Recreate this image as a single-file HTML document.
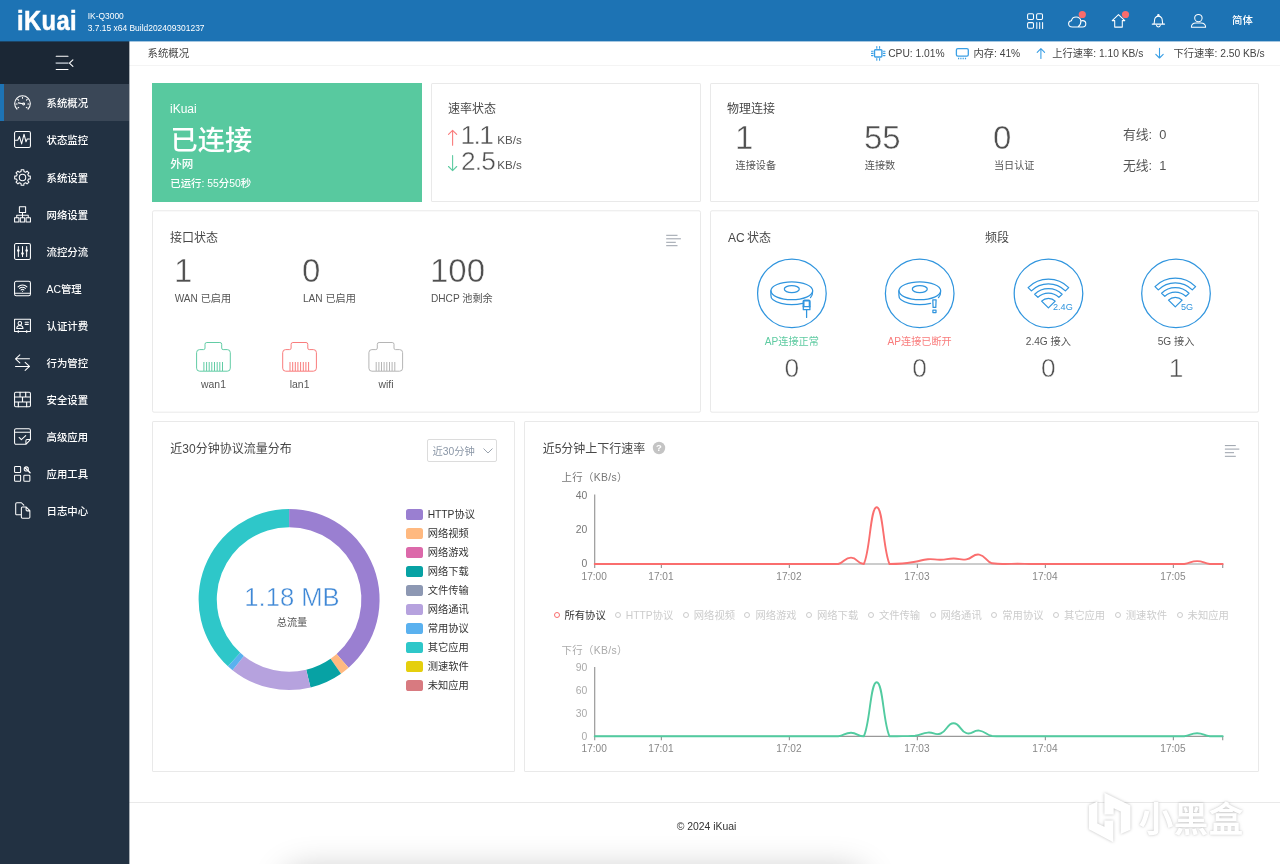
<!DOCTYPE html>
<html lang="zh-CN">
<head>
<meta charset="utf-8">
<title>iKuai - 系统概况</title>
<style>
*{box-sizing:border-box;margin:0;padding:0}
html,body{width:1280px;height:864px;overflow:hidden;background:#fff}
#app{position:absolute;left:0;top:0;width:1280px;height:864px;overflow:hidden;background:#fff;will-change:transform}
body{position:relative;font-family:"Liberation Sans","Noto Sans CJK SC",sans-serif;font-size:10.4px;color:#444;line-height:1}
.a{position:absolute;white-space:nowrap}
svg{position:absolute;overflow:visible}
#hdr{position:absolute;left:0;top:0;width:1280px;height:41px;background:#1d73b4;box-shadow:0 1px 0 rgba(29,115,180,.4);z-index:3}
#logo{position:absolute;left:16.6px;top:4.3px;font-size:27.4px;line-height:33px;font-weight:bold;color:#fff;-webkit-text-stroke:.5px #fff;letter-spacing:.5px;transform-origin:0 50%;transform:scaleX(.865)}
.ver{position:absolute;left:87.7px;color:#fff;font-size:8.45px;line-height:12px;white-space:nowrap}
.hi{fill:none;stroke:#fff;stroke-width:1.05;stroke-linecap:round;stroke-linejoin:round}
#side{position:absolute;left:0;top:41px;width:129px;height:823px;background:#223142;box-shadow:1px 0 0 rgba(34,49,66,.38);z-index:2}
#tog{position:absolute;left:0;top:0;width:129px;height:43.3px;background:#1b2735}
.mi{position:absolute;left:0;width:129px;height:37.1px;color:#fff;font-size:10.4px;line-height:37.1px}
.mi span{position:absolute;left:46.5px;top:1px;font-weight:500}
.mi svg{left:14px;top:10.05px;width:17px;height:17px;fill:none;stroke:#fff;stroke-width:1.1;stroke-linecap:round;stroke-linejoin:round}
.mi.on{background:#3a4757}
.mi.on:before{content:"";position:absolute;left:0;top:0;width:3.6px;height:100%;background:#1d73b4}
#crumb{position:absolute;left:129px;top:41px;width:1151px;height:24.5px;border-bottom:1px solid #f4f4f4;background:#fff}
.st{position:absolute;top:1px;line-height:24px;font-size:10.25px;color:#444;white-space:nowrap}
.card{position:absolute;background:#fff;border-radius:1.5px;box-shadow:inset 0 0 0 1px #e9e9e9}
.tt{position:absolute;margin-top:1px;font-size:12px;line-height:16px;color:#484848;white-space:nowrap}
.big{position:absolute;font-size:33px;line-height:32px;color:#505050;-webkit-text-stroke:.5px #fff;paint-order:fill stroke;white-space:nowrap}
.lb{position:absolute;margin-top:1px;font-size:10.15px;line-height:14px;color:#555;white-space:nowrap}
.c{transform:translateX(-50%)}
.lg{position:absolute;left:254px;width:110px;height:19px}
.lg i{position:absolute;left:.2px;top:4px;width:17.2px;height:10.6px;border-radius:2.6px}
.lg span{position:absolute;left:21.7px;top:0;line-height:19px;font-size:10.25px;color:#333;white-space:nowrap}
.cl{position:absolute;top:187.5px;height:14px;line-height:14px;font-size:10.3px;color:#ccc;white-space:nowrap}
.cl i{position:absolute;left:-11px;top:3.5px;width:6px;height:6px;border:1px solid #ccc;border-radius:50%}
</style>
</head>
<body>
<div id="app">
<div id="hdr">
  <div id="logo">iKuai</div>
  <div class="ver" style="top:10px">IK-Q3000</div>
  <div class="ver" style="top:21.5px">3.7.15 x64 Build202409301237</div>
  <svg class="hi" style="left:1020px;top:0;width:200px;height:41px" viewBox="1020 0 200 41">
    <rect x="1027.6" y="13.7" width="5.9" height="5.7" rx="1.2"/>
    <rect x="1036.6" y="13.7" width="5.9" height="5.7" rx="1.2"/>
    <rect x="1027.6" y="22.6" width="5.9" height="5.7" rx="1.2"/>
    <path d="M1036.8 22.4v6.1M1039.7 22.4v6.1M1042.6 22.4v6.1"/>
    <path d="M1072.3 26.9c-2.3 0-3.7-1.4-3.7-3.1 0-1.6 1.2-2.9 2.8-3 .4-2.3 2.3-3.9 4.7-3.9 2.5 0 4.5 1.8 4.8 4.1M1080.9 21c.5-.3 1.1-.4 1.7-.4 1.8 0 3.2 1.4 3.2 3.1 0 1.8-1.4 3.2-3.2 3.2h-10.3M1080.9 21c.2 2.4-.9 4.4-2.9 5.9"/>
    <path d="M1118.5 14.6l6.3 6h-2.5v6.5h-7.6v-6.5h-2.5z"/>
    <path d="M1152.2 24.1h12.4M1153.9 24.1c.8-2.1.3-4.3 1.2-6 .8-1.4 1.9-2 3.3-2s2.5.6 3.3 2c.9 1.7.4 3.9 1.2 6M1156.5 25.4c.5 2 3.3 2 3.8 0"/>
    <circle cx="1158.4" cy="15.2" r=".7"/>
    <circle cx="1198.4" cy="18.1" r="3.7"/>
    <path d="M1191.4 27.3c0-2.8 2.1-4.3 4.6-4.3h4.8c2.5 0 4.8 1.5 4.8 4.3z"/>
    <circle cx="1082.3" cy="14.5" r="3.6" fill="#f96c6c" stroke="none"/>
    <circle cx="1125.5" cy="14.5" r="3.6" fill="#f96c6c" stroke="none"/>
  </svg>
  <div class="a" style="left:1232px;top:10px;line-height:21px;font-size:10.4px;font-weight:500;color:#fff">简体</div>
</div>
<div id="side">
<div id="tog"><svg style="left:55px;top:10px;width:20px;height:20px" viewBox="55 51 20 20" fill="none" stroke="#fff" stroke-width="1.1" stroke-linecap="round" stroke-linejoin="round"><path d="M56.2 56.3h11.8M56.2 69.5h11.8M72.9 59.8l-3.5 3.3 3.5 3.3"/><path d="M56.2 63.1h11.8" stroke="#9aa3ad" stroke-width="1.6"/></svg></div>
<div class="mi on" style="top:43.3px"><svg viewBox="0 -.4 18 18"><path d="M3.1 15.6A8.3 8.3 0 1 1 14.9 15.6M9 3v1.2M4 5.3l.8.8M14 5.3l-.8.8M2.2 10.2h1.1M15.8 10.2h-1.1M4.2 14.4l.8-.7M13.8 14.4l-.8-.7M4.6 9l4.6 1"/><circle cx="10.2" cy="10.2" r="1"/></svg><span>系统概况</span></div>
<div class="mi" style="top:80.4px"><svg viewBox="0 0 18 18"><rect x=".6" y=".6" width="16.8" height="16.8" rx="1.6"/><path d="M1.6 9.8h2.4l1.8-3.9 2.3 7.8 2.5-10.3 2.1 8 1.3-3h2.4"/></svg><span>状态监控</span></div>
<div class="mi" style="top:117.5px"><svg viewBox="0 0 18 18"><path d="M7.48 2.68 L7.56 0.73 L10.44 0.73 L10.52 2.68 L12.40 3.46 L13.83 2.13 L15.87 4.17 L14.54 5.60 L15.32 7.48 L17.27 7.56 L17.27 10.44 L15.32 10.52 L14.54 12.40 L15.87 13.83 L13.83 15.87 L12.40 14.54 L10.52 15.32 L10.44 17.27 L7.56 17.27 L7.48 15.32 L5.60 14.54 L4.17 15.87 L2.13 13.83 L3.46 12.40 L2.68 10.52 L0.73 10.44 L0.73 7.56 L2.68 7.48 L3.46 5.60 L2.13 4.17 L4.17 2.13 L5.60 3.46Z"/><circle cx="9" cy="9" r="3.4"/></svg><span>系统设置</span></div>
<div class="mi" style="top:154.6px"><svg viewBox="0 0 18 18"><rect x="5.7" y=".7" width="6.6" height="6.2"/><path d="M9 6.9v5.4M2.9 12.3V9.8h12.2v2.5"/><rect x=".6" y="12.4" width="4.6" height="4.6"/><rect x="6.7" y="12.4" width="4.6" height="4.6"/><rect x="12.8" y="12.4" width="4.6" height="4.6"/></svg><span>网络设置</span></div>
<div class="mi" style="top:191.7px"><svg viewBox="0 0 18 18"><rect x=".6" y=".6" width="16.8" height="16.8" rx="1.6"/><path d="M4.6 3.8v10.4M9 3.8v10.4M13.4 3.8v10.4"/><circle cx="4.6" cy="8" r=".8" fill="#fff"/><circle cx="9" cy="11.2" r=".8" fill="#fff"/><circle cx="13.4" cy="8" r=".8" fill="#fff"/></svg><span>流控分流</span></div>
<div class="mi" style="top:228.8px"><svg viewBox="0 0 18 18"><rect x=".6" y="1.4" width="16.8" height="15.2" rx="1.8"/><path d="M.8 14h16.4M4.3 7.3a6.6 6.6 0 0 1 9.4 0M5.8 9a4.5 4.5 0 0 1 6.4 0M7.4 10.6a2.3 2.3 0 0 1 3.2 0"/><circle cx="9" cy="11.9" r=".6" fill="#fff" stroke="none"/></svg><span>AC管理</span></div>
<div class="mi" style="top:265.9px"><svg viewBox="0 0 18 18"><path d="M3.6 15.4H.6V2.4h16.8v13h-3M5.4 15.4h7.2M4.5 14.3v2.2M13.5 14.3v2.2"/><circle cx="6.2" cy="6.6" r="1.9"/><path d="M2.9 12.2c0-2.2 1.4-3.3 3.3-3.3s3.3 1.1 3.3 3.3z"/><path d="M11.8 5.6h3.4M11.8 7.8h3.4"/></svg><span>认证计费</span></div>
<div class="mi" style="top:303px"><svg viewBox="0 0 18 18"><path d="M16.4 5.1H1.6M6.2.9L1.6 5.1l4.6 4.3M1.6 13.2h14.8M11.8 8.9l4.6 4.3-4.6 4.2"/></svg><span>行为管控</span></div>
<div class="mi" style="top:340.1px"><svg viewBox="0 0 18 18"><rect x=".6" y="1.4" width="16.8" height="15.2" rx="1.2"/><path d="M.6 6.4h16.8M.6 11.6h16.8M6.4 1.4v5M12.4 1.4v5M9 6.4v5.2M4.6 11.6v5M13.4 11.6v5" stroke-width="1.2"/></svg><span>安全设置</span></div>
<div class="mi" style="top:377.2px"><svg viewBox="0 0 18 18"><path d="M2.2.7h13.6a1.6 1.6 0 0 1 1.6 1.6v9.9l-4.8 5.1H2.2a1.6 1.6 0 0 1-1.6-1.6V2.3A1.6 1.6 0 0 1 2.2.7zM.6 4.4h16.8M5.4 10l2.4 2.4 4.6-4.4M12.6 17.2v-3.8a1.2 1.2 0 0 1 1.2-1.2h3.5"/></svg><span>高级应用</span></div>
<div class="mi" style="top:414.3px"><svg viewBox="0 0 18 18"><rect x=".6" y="1.6" width="6.4" height="6.4" rx=".8"/><rect x=".6" y="10.8" width="6.4" height="6.4" rx=".8"/><rect x="10.4" y="10.8" width="6.4" height="6.4" rx=".8"/><circle cx="13" cy="4.2" r="2.2"/><path d="M12.2 3.4l1.6 1.6M14.7 5.9l2.3 2.3" stroke-width="1.5"/></svg><span>应用工具</span></div>
<div class="mi" style="top:451.4px"><svg viewBox="0 0 18 18"><path d="M7.6 13.6H3a1.2 1.2 0 0 1-1.2-1.2V2A1.2 1.2 0 0 1 3 .8h4.8l2.6 2.6M7.8 6.6a1.2 1.2 0 0 1 1.2-1.2h4l3.8 3.8v6.8a1.2 1.2 0 0 1-1.2 1.2H9a1.2 1.2 0 0 1-1.2-1.2zM12.8 5.6v2.6a1.2 1.2 0 0 0 1.2 1.2h2.6"/></svg><span>日志中心</span></div>
</div>
<div id="crumb">
  <div class="st" style="left:18.5px;top:1px;font-size:10.4px">系统概况</div>
  <svg style="left:738px;top:0;width:300px;height:24px" viewBox="867 41 300 24" fill="none" stroke="#3a9fe5" stroke-width="1.1" stroke-linecap="round" stroke-linejoin="round">
    <rect x="874.5" y="49.7" width="7.4" height="7.3" rx=".9" stroke-width="1.4"/>
    <path d="M871.5 51.2h1.5M871.5 53.4h1.5M871.5 55.6h1.5M883.5 51.2h1.5M883.5 53.4h1.5M883.5 55.6h1.5M876.8 46.5v1.7M879.6 46.5v1.7M876.8 58.6v1.7M879.6 58.6v1.7"/>
    <rect x="956.4" y="48.6" width="11.9" height="7.5" rx="1.4" stroke-width="1.3"/>
    <path d="M958 58.4h1.2M960.3 58.4h1.2M962.6 58.4h1.2M964.9 58.4h1.2" stroke-width="1.5" stroke-linecap="butt"/>
    <path d="M1040.9 48.8v9.6M1037.2 52.4l3.7-3.7 3.7 3.7"/>
    <path d="M1159.5 48.3v9.6M1155.8 54.3l3.7 3.7 3.7-3.7"/>
  </svg>
  <div class="st" id="s1" style="left:759.2px">CPU: 1.01%</div>
  <div class="st" id="s2" style="left:844.5px">内存: 41%</div>
  <div class="st" id="s3" style="left:923.2px">上行速率: 1.10 KB/s</div>
  <div class="st" id="s4" style="left:1044.5px">下行速率: 2.50 KB/s</div>
</div>
<!-- row 1 -->
<div class="card" id="c1" style="left:152px;top:83px;width:270px;height:119px;background:#58c99f;box-shadow:none;border-radius:0;color:#fff;font-weight:500">
  <div class="a" style="left:18px;top:18.2px;font-size:12px;line-height:16px">iKuai</div>
  <div class="a" style="left:18.5px;top:39.6px;font-size:27.2px;line-height:36px">已连接</div>
  <div class="a" style="left:18.3px;top:73.3px;font-size:11.5px;line-height:16px">外网</div>
  <div class="a" style="left:18.3px;top:93.8px;font-size:10.4px;line-height:14px">已运行: 55分50秒</div>
</div>
<div class="card" id="c2" style="left:431px;top:83px;width:270px;height:119px">
  <div class="tt" style="left:17px;top:17px">速率状态</div>
  <svg style="left:14px;top:42px;width:16px;height:50px" viewBox="445 125 16 50" fill="none" stroke-width="1.1" stroke-linecap="round" stroke-linejoin="round">
    <path d="M452.6 130.3v15M448.5 134.4l4.1-4.1 4.1 4.1" stroke="#f97c7c"/>
    <path d="M452.6 155.6v15M448.5 166.5l4.1 4.1 4.1-4.1" stroke="#5ecba1"/>
  </svg>
  <div class="a" id="sp1" style="left:29.5px;top:36px;font-size:26.3px;line-height:32px;color:#505050;-webkit-text-stroke:.45px #fff;letter-spacing:-1.6px">1.1</div><div class="a" style="left:66.3px;top:48.5px;font-size:11.6px;line-height:16px;color:#555">KB/s</div>
  <div class="a" id="sp2" style="left:30px;top:61.7px;font-size:26.3px;line-height:32px;color:#505050;-webkit-text-stroke:.45px #fff;letter-spacing:-.8px">2.5</div><div class="a" style="left:66.3px;top:74.2px;font-size:11.6px;line-height:16px;color:#555">KB/s</div>
</div>
<div class="card" id="c3" style="left:710px;top:83px;width:549px;height:119px">
  <div class="tt" style="left:17px;top:17px">物理连接</div>
  <div class="big" style="left:25px;top:39px">1</div>
  <div class="lb" style="left:25.6px;top:75px">连接设备</div>
  <div class="big" style="left:154px;top:39px">55</div>
  <div class="lb" style="left:154.8px;top:75px">连接数</div>
  <div class="big" style="left:283px;top:39px">0</div>
  <div class="lb" style="left:284px;top:75px">当日认证</div>
  <div class="a" style="left:413px;top:44px;font-size:12.8px;line-height:16px;color:#555;word-spacing:3.6px">有线: 0</div>
  <div class="a" style="left:413px;top:75px;font-size:12.8px;line-height:16px;color:#555;word-spacing:3.6px">无线: 1</div>
</div>
<!-- row 2 -->
<div class="card" id="c4" style="left:152px;top:211px;width:549px;height:201px;box-shadow:none">
  <svg style="left:0;top:-1px;width:549px;height:204px" viewBox="0 0 549 204"><rect x=".5" y=".8" width="548" height="201.4" rx="1.5" fill="none" stroke="#e9e9e9"/></svg>
  <div class="tt" style="left:18px;top:17.7px">接口状态</div>
  <svg style="left:513px;top:23px;width:17px;height:13px" viewBox="665 234 17 13" fill="none" stroke="#8f96a0" stroke-width=".9"><path d="M666.2 235.3H677.5M666.2 238.8H680.9M666.2 242.3H675.8M666.2 245.7H677.5"/></svg>
  <div class="big" style="left:22px;top:44px">1</div>
  <div class="lb" style="left:22.7px;top:80px">WAN 已启用</div>
  <div class="big" style="left:150px;top:44px">0</div>
  <div class="lb" style="left:150.9px;top:80px">LAN 已启用</div>
  <div class="big" style="left:278px;top:44px">100</div>
  <div class="lb" style="left:279px;top:80px">DHCP 池剩余</div>
  <svg style="left:40px;top:128px;width:220px;height:34px" viewBox="192 339 220 34" fill="none" stroke-width="1" stroke-linejoin="round">
    <g stroke="#62cca5"><path d="M199.6 371.2H227.3a3 3 0 0 0 3-3V352.6a3 3 0 0 0-3-3H223.2a1.5 1.5 0 0 1-1.5-1.5V344.3a1.8 1.8 0 0 0-1.8-1.8H206.8a1.8 1.8 0 0 0-1.8 1.8V348.1a1.5 1.5 0 0 1-1.5 1.5H199.6a3 3 0 0 0-3 3V368.2a3 3 0 0 0 3 3z"/><path d="M203.9 362v9M206.6 362v9M209.2 362v9M211.8 362v9M214.5 362v9M217.2 362v9M219.8 362v9M222.5 362v9"/></g>
    <g stroke="#f97c7c" transform="translate(86.1 0)"><path d="M199.6 371.2H227.3a3 3 0 0 0 3-3V352.6a3 3 0 0 0-3-3H223.2a1.5 1.5 0 0 1-1.5-1.5V344.3a1.8 1.8 0 0 0-1.8-1.8H206.8a1.8 1.8 0 0 0-1.8 1.8V348.1a1.5 1.5 0 0 1-1.5 1.5H199.6a3 3 0 0 0-3 3V368.2a3 3 0 0 0 3 3z"/><path d="M203.9 362v9M206.6 362v9M209.2 362v9M211.8 362v9M214.5 362v9M217.2 362v9M219.8 362v9M222.5 362v9"/></g>
    <g stroke="#b5b5b5" transform="translate(172.3 0)"><path d="M199.6 371.2H227.3a3 3 0 0 0 3-3V352.6a3 3 0 0 0-3-3H223.2a1.5 1.5 0 0 1-1.5-1.5V344.3a1.8 1.8 0 0 0-1.8-1.8H206.8a1.8 1.8 0 0 0-1.8 1.8V348.1a1.5 1.5 0 0 1-1.5 1.5H199.6a3 3 0 0 0-3 3V368.2a3 3 0 0 0 3 3z"/><path d="M203.9 362v9M206.6 362v9M209.2 362v9M211.8 362v9M214.5 362v9M217.2 362v9M219.8 362v9M222.5 362v9"/></g>
  </svg>
  <div class="lb c" style="left:61.5px;top:166px;font-size:10.4px">wan1</div>
  <div class="lb c" style="left:147.6px;top:166px;font-size:10.4px">lan1</div>
  <div class="lb c" style="left:234px;top:166px;font-size:10.4px">wifi</div>
</div>
<div class="card" id="c5" style="left:710px;top:211px;width:549px;height:201px;box-shadow:none">
  <svg style="left:0;top:-1px;width:549px;height:204px" viewBox="0 0 549 204"><rect x=".5" y=".8" width="548" height="201.4" rx="1.5" fill="none" stroke="#e9e9e9"/></svg>
  <div class="tt" style="left:18px;top:17.7px;word-spacing:-1px">AC 状态</div>
  <div class="tt" style="left:275px;top:17.7px">频段</div>
  <svg style="left:40px;top:44px;width:480px;height:78px" viewBox="750 255 480 78" fill="none" stroke="#3095de" stroke-width="1.25" stroke-linecap="round" stroke-linejoin="round">
    <circle cx="791.9" cy="293.4" r="34.3"/>
    <circle cx="919.7" cy="293.4" r="34.3"/>
    <circle cx="1048.5" cy="293.4" r="34.3"/>
    <circle cx="1176.0" cy="293.4" r="34.3"/>
    <ellipse cx="791.8" cy="290.8" rx="20.9" ry="8.9"/><ellipse cx="791.8" cy="289.1" rx="7.5" ry="3.5"/><path d="M770.9 290.8v4.5A20.9 8.9 0 0 0 802.6 303.3M812.6 291.8c.1 2.2-.6 4.2-2.1 5.8"/>
    <path d="M803.5 306.4v-5a1 1 0 0 1 1-1h4.2a1 1 0 0 1 1 1v5" stroke-width="2"/><path d="M803.3 306.5h6.6v3.2h-6.6zM806.6 309.7v7.7"/>
    <ellipse cx="919.8" cy="290.8" rx="20.9" ry="8.9"/><ellipse cx="919.8" cy="289.1" rx="7.5" ry="3.5"/><path d="M898.9 290.8v4.5A20.9 8.9 0 0 0 930.6 303.3M940.6 291.8c.1 2.2-.6 4.2-2.1 5.8"/>
    <path d="M932.8 299.8h3.3l-.3 7.6h-2.7zM932.9 310.2h3.1v2.4h-3.1z"/>
    <path d="M1028.1 287.6A28.7 28.7 0 0 1 1068.7 287.6L1065.4 290.9A24.1 24.1 0 0 0 1031.4 290.9ZM1034.7 294.2A19.4 19.4 0 0 1 1062.1 294.2L1058.9 297.4A14.9 14.9 0 0 0 1037.9 297.4ZM1041.6 301.1A9.6 9.6 0 0 1 1055.2 301.1L1048.4 307.9Z"/>
    <path d="M1155.0 286.6A28.7 28.7 0 0 1 1195.6 286.6L1192.3 289.9A24.1 24.1 0 0 0 1158.3 289.9ZM1161.6 293.2A19.4 19.4 0 0 1 1189.0 293.2L1185.8 296.4A14.9 14.9 0 0 0 1164.8 296.4ZM1168.5 300.1A9.6 9.6 0 0 1 1182.1 300.1L1175.3 306.9Z"/>
  </svg>
  <div class="a" style="left:343px;top:91.2px;font-size:9.1px;line-height:10px;color:#3095de">2.4G</div>
  <div class="a" style="left:471px;top:90.7px;font-size:9.1px;line-height:10px;color:#3095de">5G</div>
  <div class="lb c" style="left:81.8px;top:123px;color:#5ecba1">AP连接正常</div>
  <div class="lb c" style="left:209.6px;top:123px;color:#f97c7c">AP连接已断开</div>
  <div class="lb c" style="left:338.3px;top:123px">2.4G 接入</div>
  <div class="lb c" style="left:466px;top:123px">5G 接入</div>
  <div class="big c" style="left:81.8px;top:142.7px;font-size:26.3px;line-height:28px">0</div>
  <div class="big c" style="left:209.6px;top:142.7px;font-size:26.3px;line-height:28px">0</div>
  <div class="big c" style="left:338.3px;top:142.7px;font-size:26.3px;line-height:28px">0</div>
  <div class="big c" style="left:466px;top:142.7px;font-size:26.3px;line-height:28px">1</div>
</div>
<div class="card" id="c6" style="left:152px;top:421px;width:363px;height:351px">
  <div class="tt" style="left:18.3px;top:19px">近30分钟协议流量分布</div>
  <div class="a" style="left:275px;top:17.5px;width:70px;height:23px;border:1px solid #dcdcdc;border-radius:2px"><span class="a" style="left:4.5px;top:1.1px;line-height:21px;font-size:10.3px;color:#8a96a6">近30分钟</span><svg style="left:54px;top:6.3px;width:12px;height:10px" viewBox="0 0 12 10" fill="none" stroke="#9aa3ae" stroke-width="1" stroke-linecap="round" stroke-linejoin="round"><path d="M1.8 2.8l4.2 4.2 4.2-4.2"/></svg></div>
  <svg style="left:40px;top:82px;width:200px;height:194px" viewBox="192 503 200 194" shape-rendering="geometricPrecision">
    <path d="M289.10 509.00A90.5 90.5 0 0 1 348.59 667.70L336.63 653.98A72.3 72.3 0 0 0 289.10 527.20Z" fill="#9a7fd1"/>
    <path d="M348.59 667.70A90.5 90.5 0 0 1 341.01 673.63L330.57 658.72A72.3 72.3 0 0 0 336.63 653.98Z" fill="#ffb980"/>
    <path d="M341.01 673.63A90.5 90.5 0 0 1 310.53 687.43L306.22 669.74A72.3 72.3 0 0 0 330.57 658.72Z" fill="#07a2a4"/>
    <path d="M310.53 687.43A90.5 90.5 0 0 1 232.52 670.13L243.89 655.93A72.3 72.3 0 0 0 306.22 669.74Z" fill="#b6a2de"/>
    <path d="M232.52 670.13A90.5 90.5 0 0 1 227.96 666.22L240.25 652.81A72.3 72.3 0 0 0 243.89 655.93Z" fill="#5ab1ef"/>
    <path d="M227.96 666.22A90.5 90.5 0 0 1 289.10 509.00L289.10 527.20A72.3 72.3 0 0 0 240.25 652.81Z" fill="#2ec7c9"/>
  </svg>
  <div class="a c" id="pv" style="left:140px;top:160px;font-size:25.6px;line-height:32px;color:#3f88d6;-webkit-text-stroke:.45px #fff">1.18 MB</div>
  <div class="a c" style="left:140px;top:195px;font-size:10.2px;line-height:14px;color:#555">总流量</div>
  <div class="lg" style="top:84px"><i style="background:#9a7fd1"></i><span>HTTP协议</span></div>
  <div class="lg" style="top:103px"><i style="background:#ffb980"></i><span>网络视频</span></div>
  <div class="lg" style="top:122.1px"><i style="background:#dc69aa"></i><span>网络游戏</span></div>
  <div class="lg" style="top:141.1px"><i style="background:#07a2a4"></i><span>网络下载</span></div>
  <div class="lg" style="top:160.1px"><i style="background:#8d98b3"></i><span>文件传输</span></div>
  <div class="lg" style="top:179.2px"><i style="background:#b6a2de"></i><span>网络通讯</span></div>
  <div class="lg" style="top:198.2px"><i style="background:#5ab1ef"></i><span>常用协议</span></div>
  <div class="lg" style="top:217.2px"><i style="background:#2ec7c9"></i><span>其它应用</span></div>
  <div class="lg" style="top:236.2px"><i style="background:#e5cf0d"></i><span>测速软件</span></div>
  <div class="lg" style="top:255.3px"><i style="background:#d87a80"></i><span>未知应用</span></div>
</div>
<div class="card" id="c7" style="left:524px;top:421px;width:735px;height:351px">
  <div class="tt" style="left:18.7px;top:19px">近5分钟上下行速率</div>
  <svg style="left:128px;top:20.2px;width:14px;height:14px" viewBox="0 0 14 14"><circle cx="7" cy="7" r="6.2" fill="#c4c4c4"/><text x="7" y="10.3" text-anchor="middle" font-family="Liberation Sans,sans-serif" font-weight="bold" font-size="9.5" fill="#fff">?</text></svg>
  <svg style="left:699px;top:23px;width:17px;height:13px" viewBox="1223 444 17 13" fill="none" stroke="#8f96a0" stroke-width=".9"><path d="M1224.9 445.6H1235.8M1224.9 449.1H1239.3M1224.9 452.7H1234M1224.9 456.3H1235.8"/></svg>
  <svg style="left:0;top:45px;width:735px;height:120px" viewBox="524 466 735 120" font-family="Liberation Sans,Noto Sans CJK SC,sans-serif" font-size="10.4">
    <text x="561.5" y="480.5" fill="#777" letter-spacing=".35">上行（KB/s）</text>
    <text x="587.3" y="498.6" text-anchor="end" fill="#777">40</text>
    <text x="587.3" y="532.9" text-anchor="end" fill="#777">20</text>
    <text x="587.3" y="567.3" text-anchor="end" fill="#777">0</text>
    <path d="M594.7 494.6V568.0M594.7 564.0H1222.7M594.7 564.0v4M661.4 564.0v4M789.4 564.0v4M917.4 564.0v4M1045.4 564.0v4M1173.4 564.0v4M1222.7 564.0v4" fill="none" stroke="#999" stroke-width="1.2"/>
    <text x="594.2" y="579.6" text-anchor="middle" fill="#888" font-size="10.1">17:00</text>
    <text x="660.9" y="579.6" text-anchor="middle" fill="#888" font-size="10.1">17:01</text>
    <text x="788.9" y="579.6" text-anchor="middle" fill="#888" font-size="10.1">17:02</text>
    <text x="916.9" y="579.6" text-anchor="middle" fill="#888" font-size="10.1">17:03</text>
    <text x="1044.9" y="579.6" text-anchor="middle" fill="#888" font-size="10.1">17:04</text>
    <text x="1172.9" y="579.6" text-anchor="middle" fill="#888" font-size="10.1">17:05</text>
    <path d="M594.7 564.0H607.5H620.3H633.1H646.0H658.8H671.6H684.4H697.2H710.0H722.9H735.7H748.5H761.3H774.1H786.9H799.8H812.6H825.4H838.2C844.6 562.4 844.6 557.6 851.0 557.6C857.4 557.6 857.4 564.0 863.8 564.0C870.2 551.4 870.2 507.2 876.7 507.2C883.1 507.2 883.1 549.9 889.5 564.0C895.9 564.0 895.9 564.0 902.3 563.5C908.7 562.9 908.7 562.8 915.1 561.8C921.5 560.7 921.5 559.7 927.9 559.2C934.3 558.7 934.3 559.9 940.7 559.7C947.1 559.5 947.1 558.6 953.5 558.5C960.0 558.4 960.0 560.4 966.4 559.4C972.8 558.4 972.8 553.6 979.2 554.6C985.6 555.5 985.6 561.0 992.0 563.3C998.4 564.0 998.4 563.9 1004.8 564.0C1011.2 564.0 1011.2 563.7 1017.6 563.7C1024.0 563.7 1024.0 563.9 1030.4 564.0H1043.3H1056.1H1068.9H1081.7H1094.5H1107.3H1120.2H1133.0H1145.8H1158.6H1171.4H1184.2C1190.6 563.3 1190.6 561.1 1197.1 561.1C1203.5 561.1 1203.5 563.3 1209.9 564.0H1222.7" fill="none" stroke="#fa6e6e" stroke-width="1.9" stroke-linejoin="round" stroke-linecap="round"/>
  </svg>
  <div class="cl" style="left:40.5px;color:#333"><i style="border-color:#fa6e6e"></i>所有协议</div>
  <div class="cl" style="left:101.8px"><i></i>HTTP协议</div>
  <div class="cl" style="left:169.8px"><i></i>网络视频</div>
  <div class="cl" style="left:231.4px"><i></i>网络游戏</div>
  <div class="cl" style="left:293.0px"><i></i>网络下载</div>
  <div class="cl" style="left:354.9px"><i></i>文件传输</div>
  <div class="cl" style="left:416.5px"><i></i>网络通讯</div>
  <div class="cl" style="left:478.3px"><i></i>常用协议</div>
  <div class="cl" style="left:539.9px"><i></i>其它应用</div>
  <div class="cl" style="left:601.8px"><i></i>测速软件</div>
  <div class="cl" style="left:663.6px"><i></i>未知应用</div>
  <svg style="left:0;top:218px;width:735px;height:118px" viewBox="524 639 735 118" font-family="Liberation Sans,Noto Sans CJK SC,sans-serif" font-size="10.4">
    <text x="561.5" y="654.2" fill="#aaa" letter-spacing=".35">下行（KB/s）</text>
    <text x="587.3" y="671.2" text-anchor="end" fill="#aaa">90</text>
    <text x="587.3" y="694.3" text-anchor="end" fill="#aaa">60</text>
    <text x="587.3" y="717.2" text-anchor="end" fill="#aaa">30</text>
    <text x="587.3" y="740.1" text-anchor="end" fill="#aaa">0</text>
    <path d="M594.7 667.0V740.3M594.7 736.3H1222.7M594.7 736.3v4M661.4 736.3v4M789.4 736.3v4M917.4 736.3v4M1045.4 736.3v4M1173.4 736.3v4M1222.7 736.3v4" fill="none" stroke="#999" stroke-width="1.2"/>
    <text x="594.2" y="751.9" text-anchor="middle" fill="#888" font-size="10.1">17:00</text>
    <text x="660.9" y="751.9" text-anchor="middle" fill="#888" font-size="10.1">17:01</text>
    <text x="788.9" y="751.9" text-anchor="middle" fill="#888" font-size="10.1">17:02</text>
    <text x="916.9" y="751.9" text-anchor="middle" fill="#888" font-size="10.1">17:03</text>
    <text x="1044.9" y="751.9" text-anchor="middle" fill="#888" font-size="10.1">17:04</text>
    <text x="1172.9" y="751.9" text-anchor="middle" fill="#888" font-size="10.1">17:05</text>
    <path d="M594.7 736.3H607.5H620.3H633.1H646.0H658.8H671.6H684.4H697.2H710.0H722.9H735.7H748.5H761.3H774.1H786.9H799.8H812.6H825.4H838.2C844.6 735.4 844.6 732.8 851.0 732.8C857.4 732.8 857.4 736.3 863.8 736.3C870.2 723.6 870.2 682.2 876.7 682.2C883.1 682.2 883.1 722.8 889.5 736.3C895.9 736.3 895.9 736.2 902.3 736.1C908.7 736.0 908.7 736.3 915.1 735.8C921.5 735.0 921.5 733.2 927.9 732.6C934.3 732.0 934.3 735.8 940.7 733.5C947.1 731.1 947.1 723.3 953.5 723.2C960.0 723.1 960.0 731.3 966.4 733.2C972.8 735.0 972.8 729.9 979.2 730.6C985.6 731.3 985.6 734.6 992.0 736.0C998.4 736.3 998.4 736.2 1004.8 736.3H1017.6H1030.4H1043.3H1056.1H1068.9H1081.7H1094.5H1107.3H1120.2H1133.0H1145.8H1158.6H1171.4H1184.2C1190.6 735.5 1190.6 733.2 1197.1 733.2C1203.5 733.2 1203.5 735.5 1209.9 736.3H1222.7" fill="none" stroke="#52cba0" stroke-width="1.9" stroke-linejoin="round" stroke-linecap="round"/>
  </svg>
</div>
<div class="a" style="left:129px;top:802px;width:1151px;height:1px;background:#e9e9e9"></div>
<div class="a c" id="ft" style="left:706.5px;top:819.5px;font-size:10.4px;line-height:14px;color:#333">© 2024 iKuai</div>
<div class="a" style="left:288px;top:874px;width:574px;height:30px;border-radius:15px;box-shadow:0 0 34px 4px rgba(0,0,0,.23)"></div>
<div class="a" id="wm" style="left:1086px;top:790px;width:170px;height:56px;color:#fff;text-shadow:0 0 2px rgba(0,0,0,.2),0 0 4px rgba(0,0,0,.1)">
  <svg style="left:0;top:0;width:46px;height:56px;filter:drop-shadow(0 0 1.5px rgba(0,0,0,.26))" viewBox="1086 790 46 56" fill="#fff"><path d="M1104.4 792.7l26 12.9v24.1l-9.7 4.4v-22.5l-7-3.4v6.3h-9.3zM1088.9 805.6l8.5-4v21.8l7 3.3v-6.3h8.9v21.9l-24.4-13z"/></svg>
  <div class="a" style="left:52.5px;top:9.5px;font-size:35px;line-height:40px;font-weight:bold">小黑盒</div>
</div>
<div class="a" id="cr1" style="left:0;top:0;width:3px;height:3px;background:radial-gradient(circle at 3px 3px,rgba(255,255,255,0) 2.6px,#fff 3.4px)"></div>
<div class="a" id="cr2" style="left:0;top:861px;width:3px;height:3px;background:radial-gradient(circle at 3px 0,rgba(200,212,226,0) 2.6px,#c8d4e2 3.4px)"></div>
</div>
</body>
</html>
